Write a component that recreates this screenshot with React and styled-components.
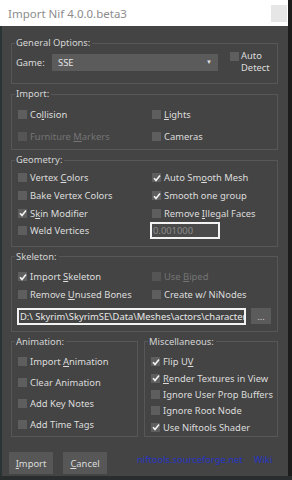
import React from 'react'
import styled, { createGlobalStyle } from 'styled-components'

const GlobalStyle = createGlobalStyle`
  html, body {
    margin: 0;
    padding: 0;
    background: #2a2d2d;
  }
  body {
    font-family: "Noto Sans", "Open Sans", sans-serif;
    font-size: 9.4px;
    color: #dcdcdc;
  }
`

const Window = styled.div`
  width: 288px;
  height: 476px;
  display: flex;
  flex-direction: column;
  background: #444444;
  border-right: 4px solid #1c1c1c;
  overflow: hidden;
`

const TitleBar = styled.div`
  height: 26px;
  flex: none;
  background: #ffffff;
  display: flex;
  align-items: center;
  justify-content: space-between;
  padding-left: 8px;
`

const Title = styled.span`
  font-size: 11.5px;
  color: #8c8c8c;
`

const CloseButton = styled.div`
  width: 16px;
  height: 17px;
  margin-right: 1px;
  margin-top: 1px;
  background: #e6e6e6;
`

const Body = styled.div`
  flex: 1;
  display: flex;
  flex-direction: column;
  gap: 4px;
  padding: 11px 10px 0 9px;
  border-left: 2px solid #2b3434;
`

const Group = styled.fieldset`
  margin: 0;
  padding: 0 6px ${p => p.$pb || 0}px 6px;
  border: 1px solid #575757;
  min-width: 0;
  flex: ${p => (p.$w ? `0 0 ${p.$w}px` : 'none')};
  box-sizing: border-box;
`

const Legend = styled.legend`
  padding: 0 2px 0 1px;
  margin-left: -3px;
  color: #d4d4d4;
  line-height: 12px;
`

const Pair = styled.div`
  display: flex;
  gap: 6px;
`

const Grid = styled.div`
  display: grid;
  grid-template-columns: 134px 1fr;
  grid-auto-rows: ${p => p.$row}px;
  align-items: center;
  padding-top: ${p => p.$top || 0}px;
`

const Column = styled.div`
  display: grid;
  grid-auto-rows: ${p => p.$row}px;
  align-items: center;
  padding-top: ${p => p.$top || 0}px;
`

const Check = styled.label`
  display: flex;
  align-items: center;
  gap: 3px;
  white-space: nowrap;
  color: ${p => (p.$disabled ? '#747474' : '#dcdcdc')};
`

const Box = styled.span`
  width: 9px;
  height: 9px;
  flex: none;
  background: ${p => (p.$disabled ? '#555555' : '#5e5e5e')};
  display: flex;
  align-items: center;
  justify-content: center;
`

const GameRow = styled.div`
  display: flex;
  align-items: center;
  height: 26px;
  margin-left: -2px;
`

const GameLabel = styled.span`
  width: 36px;
  flex: none;
`

const Select = styled.div`
  width: 166px;
  height: 17px;
  background: #5b5b5b;
  display: flex;
  align-items: center;
  justify-content: space-between;
  padding: 0 6px;
  box-sizing: border-box;
  color: #e6e6e6;
`

const Arrow = styled.span`
  font-size: 6px;
  color: #e0e0e0;
`

const AutoDetect = styled.div`
  display: flex;
  align-items: flex-start;
  gap: 2px;
  margin-left: 12px;
  line-height: 12px;
  & > span:first-child {
    margin-top: 2px;
  }
`

const TextField = styled.div`
  width: ${p => p.$w}px;
  height: 17px;
  box-sizing: border-box;
  border: 2px solid #f2f2f2;
  background: ${p => p.$bg || '#4a4a4a'};
  color: ${p => p.$color || '#8a8a8a'};
  padding-left: 1px;
  display: flex;
  align-items: center;
  white-space: nowrap;
  overflow: hidden;
  margin-left: ${p => p.$ml ?? -2}px;
`

const PathRow = styled.div`
  display: flex;
  align-items: center;
  gap: 5px;
  padding-top: 4px;
`

const SmallButton = styled.div`
  width: 20px;
  height: 16px;
  background: #5b5b5b;
  color: #cfcfcf;
  display: flex;
  align-items: center;
  justify-content: center;
  line-height: 1;
`

const Footer = styled.div`
  display: flex;
  align-items: center;
  padding: 11px 0 0 0;
  margin-left: -2px;
  gap: 10px;
`

const Button = styled.div`
  width: 44px;
  height: 22px;
  background: #575757;
  color: #dcdcdc;
  display: flex;
  align-items: center;
  justify-content: center;
`

const Links = styled.div`
  display: flex;
  gap: 11px;
  margin-left: 20px;
  color: #2434c4;
  margin-top: -8px;
`

const CheckMark = () => (
  <svg width="8" height="8" viewBox="0 0 8 8">
    <polyline points="1,4.2 3,6.4 7,1.4" fill="none" stroke="#f2f2f2" strokeWidth="1.6" />
  </svg>
)

const CheckBox = ({ checked, disabled, children }) => (
  <Check $disabled={disabled}>
    <Box $disabled={disabled}>{checked && <CheckMark />}</Box>
    <span>{children}</span>
  </Check>
)

export default function App() {
  return (
    <>
      <GlobalStyle />
      <Window>
        <TitleBar>
          <Title>Import Nif 4.0.0.beta3</Title>
          <CloseButton />
        </TitleBar>
        <Body>
          <Group $pb={8}>
            <Legend>General Options:</Legend>
            <GameRow>
              <GameLabel>Game:</GameLabel>
              <Select>
                <span>SSE</span>
                <Arrow>▼</Arrow>
              </Select>
              <AutoDetect>
                <Box />
                <span>Auto<br />Detect</span>
              </AutoDetect>
            </GameRow>
          </Group>

          <Group $pb={2}>
            <Legend>Import:</Legend>
            <Grid $row={22} $top={3}>
              <CheckBox>Co<u>l</u>lision</CheckBox>
              <CheckBox><u>L</u>ights</CheckBox>
              <CheckBox disabled>Furniture <u>M</u>arkers</CheckBox>
              <CheckBox>Cameras</CheckBox>
            </Grid>
          </Group>

          <Group $pb={6}>
            <Legend>Geometry:</Legend>
            <Grid $row={17.7} $top={3}>
              <CheckBox>Vertex <u>C</u>olors</CheckBox>
              <CheckBox checked>Auto Sm<u>o</u>oth Mesh</CheckBox>
              <CheckBox>Bake Vertex Colors</CheckBox>
              <CheckBox checked>Smooth one group</CheckBox>
              <CheckBox checked>S<u>k</u>in Modifier</CheckBox>
              <CheckBox>Remove <u>I</u>llegal Faces</CheckBox>
              <CheckBox>Weld Vertices</CheckBox>
              <TextField $w={70}>0.001000</TextField>
            </Grid>
          </Group>

          <Group $pb={6}>
            <Legend>Skeleton:</Legend>
            <Grid $row={18} $top={5}>
              <CheckBox checked>Import <u>S</u>keleton</CheckBox>
              <CheckBox disabled>Use <u>B</u>iped</CheckBox>
              <CheckBox>Remove <u>U</u>nused Bones</CheckBox>
              <CheckBox>Create w/ NiNodes</CheckBox>
            </Grid>
            <PathRow>
              <TextField $w={230} $ml={-1} $bg="#444444" $color="#e8e8e8">
                D:\ Skyrim\SkyrimSE\Data\Meshes\actors\character
              </TextField>
              <SmallButton>...</SmallButton>
            </PathRow>
          </Group>

          <Pair>
            <Group $w={127} $pb={1}>
              <Legend>Animation:</Legend>
              <Column $row={21} $top={3.5}>
                <CheckBox>Import <u>A</u>nimation</CheckBox>
                <CheckBox>Clear Animation</CheckBox>
                <CheckBox>Add Key Notes</CheckBox>
                <CheckBox>Add Time Tags</CheckBox>
              </Column>
            </Group>
            <Group $w={134} $pb={1}>
              <Legend>Miscellaneous:</Legend>
              <Column $row={16.3} $top={6}>
                <CheckBox checked>Flip U<u>V</u></CheckBox>
                <CheckBox checked><u>R</u>ender Textures in View</CheckBox>
                <CheckBox>Ignore User Prop Buffers</CheckBox>
                <CheckBox>Ignore Root Node</CheckBox>
                <CheckBox checked>Use Niftools Shader</CheckBox>
              </Column>
            </Group>
          </Pair>

          <Footer>
            <Button><u>I</u>mport</Button>
            <Button><u>C</u>ancel</Button>
            <Links>
              <span>niftools.sourceforge.net</span>
              <span>Wiki</span>
            </Links>
          </Footer>
        </Body>
      </Window>
    </>
  )
}
